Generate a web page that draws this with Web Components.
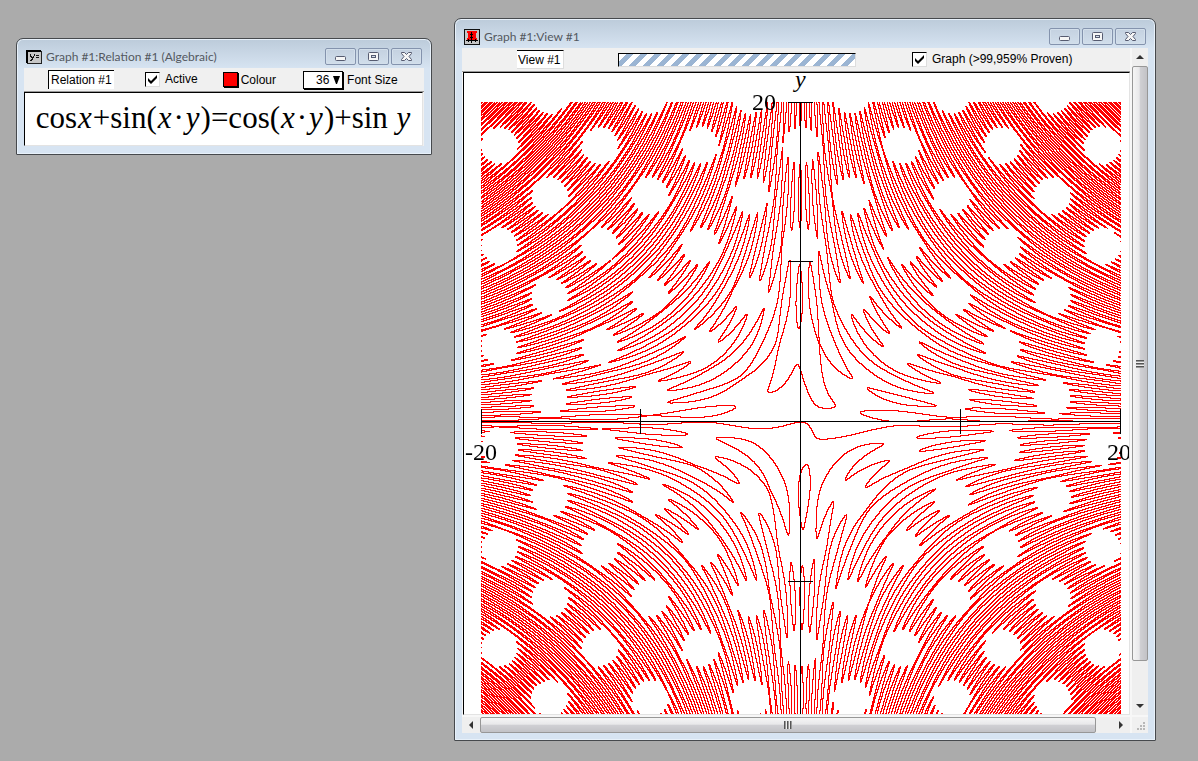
<!DOCTYPE html>
<html lang="en">
<head>
<meta charset="utf-8">
<title>Graph #1</title>
<style>
html, body { margin: 0; min-height: 100%; background: #ababab; }
body { font-family: "Liberation Sans", Arial, sans-serif; font-size: 12px; color: #000; }
</style>
</head>
<body>
<graph-desktop>
  <mdi-window slot="relation" heading="Graph #1:Relation #1 (Algebraic)">
    <svg slot="icon" width="16" height="14" viewBox="0 0 16 14" aria-hidden="true" shape-rendering="crispEdges">
      <rect x="1" y="1" width="14" height="12" fill="#c6c6c6" stroke="#222"/>
      <path d="M1 13V1h14" stroke="#000" stroke-width="2" fill="none"/>
      <path d="M4 4h1v2h1v1h1V6h1V4h1v2H8v2H7v2H6v1H4v-1h1V9h1V8H5V7H4zM10 5h3v1h-3zM10 7h3v1h-3z" fill="#111"/>
    </svg>
    <relation-panel></relation-panel>
  </mdi-window>
  <mdi-window slot="view" heading="Graph #1:View #1">
    <svg slot="icon" width="16" height="16" viewBox="0 0 16 16" aria-hidden="true" shape-rendering="crispEdges">
      <rect x="0" y="0" width="16" height="16" fill="#111"/>
      <rect x="1" y="1" width="14" height="14" fill="#c6c6c6"/>
      <path d="M3 2h10v2h-1v5h1v2H3V9h1V4H3z" fill="#f00"/>
      <path d="M7 3h1v11H7zM2 11h12v1H2zM4 10h1v3H4zM11 10h1v3h-1zM6 5h3v1H6zM6 8h3v1H6z"/>
    </svg>
    <view-panel></view-panel>
  </mdi-window>
</graph-desktop>

<script>
class GraphDesktop extends HTMLElement {
  constructor() {
    super();
    this.attachShadow({ mode: "open" }).innerHTML = `
      <style>
        :host { display: flex; align-items: flex-start; gap: 22px; padding: 18px 42px 20px 16px; background: #ababab; }
        .left { flex: 0 0 416px; margin-top: 20px; }
        .right { flex: 1; min-width: 0; }
      </style>
      <div class="left"><slot name="relation"></slot></div>
      <div class="right"><slot name="view"></slot></div>`;
  }
}

class MdiWindow extends HTMLElement {
  constructor() {
    super();
    this.attachShadow({ mode: "open" }).innerHTML = `
      <style>
        :host { display: block; box-sizing: border-box; border: 1px solid #46494d; border-radius: 7px 7px 1px 1px; padding: 0 7px 7px;
          background: linear-gradient(#bccbda 0, #d7e4f2 30px, #d7e4f2 100%); box-shadow: inset 0 0 0 1px #e8f1fa; }
        header { display: flex; align-items: center; height: 29px; }
        ::slotted(svg) { display: block; width: 16px; margin: 6px 4px 0 2px; }
        h1 { flex: 1; margin: 6px 0 0; font: 12px/16px Lato, "Noto Sans", sans-serif; color: #53585f; white-space: nowrap; }
        .buttons { display: flex; gap: 2px; padding: 6px 2px 0 0; }
        button { box-sizing: border-box; width: 31px; height: 17px; padding: 0; border: 1px solid #8493ad; border-radius: 2px;
          background: linear-gradient(#c4d1e0, #d1deeb); box-shadow: inset 0 0 0 1px #d3dfeb; }
        button svg { display: block; margin: auto; }
      </style>
      <header>
        <slot name="icon"></slot>
        <h1></h1>
        <div class="buttons">
          <button aria-label="Minimize"><svg width="13" height="11" viewBox="0 0 13 11"><rect x="1.500" y="5.500" width="10" height="4" rx="1" fill="#f6f6f6" stroke="#565b70"/></svg></button>
          <button aria-label="Maximize"><svg width="13" height="11" viewBox="0 0 13 11"><rect x="1.500" y="1.500" width="10" height="8" rx="1" fill="#f6f6f6" stroke="#565b70"/><rect x="4.500" y="4.500" width="4" height="2" fill="#d5e0ec" stroke="#565b70"/></svg></button>
          <button aria-label="Close"><svg width="13" height="11" viewBox="0 0 13 11"><path d="M1.500 1.500h3l2 2 2-2h3v1L9 5.500l2.500 3v1h-3l-2-2-2 2h-3v-1L4 5.500l-2.500-3z" fill="#f6f6f6" stroke="#565b70"/></svg></button>
        </div>
      </header>
      <slot></slot>`;
  }
  connectedCallback() {
    this.shadowRoot.querySelector("h1").textContent = this.getAttribute("heading");
  }
}

class TickBox extends HTMLElement {
  constructor() {
    super();
    this.attachShadow({ mode: "open" }).innerHTML = `
      <style>
        :host { display: block; }
        label { display: flex; align-items: center; gap: 5px; line-height: 15px; white-space: nowrap; }
        input { appearance: none; box-sizing: border-box; width: 15px; height: 15px; margin: 0; border: 1px solid; border-color: #000 #ddd #ddd #000;
          background: #fff url("data:image/svg+xml,%3Csvg xmlns='http://www.w3.org/2000/svg' width='13' height='13'%3E%3Cpath d='M2 5l3 3 6-6v3l-6 6-3-3z'/%3E%3C/svg%3E"); }
      </style>
      <label><input type="checkbox" checked><slot></slot></label>`;
  }
}

class RelationPanel extends HTMLElement {
  constructor() {
    super();
    this.attachShadow({ mode: "open" }).innerHTML = `
      <style>
        :host { display: block; background: #f0f0f0; }
        .bar { display: flex; align-items: center; height: 23px; border-bottom: 1px solid #999; }
        .name { box-sizing: border-box; width: 66px; height: 19px; margin-left: 24px; padding: 0 0 0 2px; border: 0 solid #000; border-width: 1px 0 0 1px;
          font: 12px "Liberation Sans", Arial, sans-serif; background: #fff; color: #000; }
        tick-box { margin-left: 31px; }
        .colour { display: flex; align-items: center; gap: 3px; margin-left: 25px; padding: 0; border: 0; background: none; font: inherit; color: inherit; }
        .swatch { box-sizing: border-box; width: 15px; height: 15px; border: 1px solid #000; background: red; box-shadow: 1px 1px #000; }
        .size { display: flex; align-items: center; gap: 4px; margin-left: 27px; white-space: nowrap; }
        .drop { position: relative; display: flex; }
        select { appearance: none; box-sizing: border-box; width: 40px; height: 18px; padding: 0 0 0 12px; border: 1px solid #000; border-radius: 0; background: #fff; color: #000;
          font: 12px "Liberation Sans", Arial, sans-serif; box-shadow: 1px 1px #000; }
        .drop svg { position: absolute; right: 3px; top: 5px; pointer-events: none; }
        .formula { height: 52px; border: 1px solid; border-color: #000 #e3e3e3 #e3e3e3 #000; background: #fff; margin: 0 1px 1px 0;
          font: 31px/50px "Liberation Serif", "Times New Roman", serif; white-space: nowrap; text-align: center; }
        .formula i { margin: 0 1px; }
        .formula b { margin: 0 1px; font-weight: normal; }
      </style>
      <div class="bar">
        <input class="name" aria-label="Relation name" value="Relation #1">
        <tick-box>Active</tick-box>
        <button class="colour"><span class="swatch"></span>Colour</button>
        <label class="size"><span class="drop"><select><option>36</option></select><svg width="7" height="8" viewBox="0 0 7 8"><path d="M0 0h7L4 8H3z"/></svg></span>Font Size</label>
      </div>
      <div class="formula">cos<i>x</i>+sin(<i>x</i><b>·</b><i>y</i>)=cos(<i>x</i><b>·</b><i>y</i>)+sin <i>y</i></div>`;
  }
}

class ScrollStrip extends HTMLElement {
  constructor() {
    super();
    this.attachShadow({ mode: "open" }).innerHTML = `
      <style>
        :host { display: flex; flex-direction: column; background: #efefef; }
        :host([horizontal]) { flex-direction: row; height: 16px; }
        button { flex: 0 0 18px; display: grid; place-items: center; padding: 0; border: 0; background: none; }
        .track { flex: 1; display: flex; flex-direction: column; min-height: 0; min-width: 0; padding-bottom: 36px; }
        .thumb { flex: 1; display: grid; place-items: center; box-sizing: border-box; border: 1px solid #979797; border-radius: 2px;
          background: linear-gradient(90deg, #f5f5f5, #e8e8ea 45%, #d0d0d4 50%, #c2c2c6); }
        .grip { width: 8px; height: 8px; background: repeating-linear-gradient(#555 0 1px, #999 1px 2px, #eee 2px 3px); }
        :host([horizontal]) .track { flex-direction: row; padding: 0 16px 0 0; }
        :host([horizontal]) .thumb { background: linear-gradient(#f5f5f5, #e8e8ea 45%, #d0d0d4 50%, #c2c2c6); }
        :host([horizontal]) .grip { background: repeating-linear-gradient(90deg, #555 0 1px, #999 1px 2px, #eee 2px 3px); }
        :host([horizontal]) svg { transform: rotate(-90deg); }
      </style>
      <button aria-label="Back"><svg width="8" height="8" viewBox="0 0 8 8"><path d="M0 6h8L4 2z" fill="#333"/></svg></button>
      <div class="track"><div class="thumb"><div class="grip"></div></div></div>
      <button aria-label="Forward"><svg width="8" height="8" viewBox="0 0 8 8"><path d="M0 2h8L4 6z" fill="#333"/></svg></button>`;
  }
}

/* Plots cos x + sin(xy) = cos(xy) + sin y at 16 pixels per unit. */
class RelationPlot extends HTMLElement {
  constructor() {
    super();
    this.attachShadow({ mode: "open" }).innerHTML = `
      <style>
        :host { display: block; position: relative; overflow: hidden; background: #fff; padding: 29px 0 0 17px; }
        canvas { display: block; }
        span { position: absolute; font: 24px/24px "Liberation Serif", "Times New Roman", serif; }
        .y { left: 331px; top: -6px; font-style: italic; }
        .top { left: 288px; top: 17px; }
        .min { left: 1px; top: 367px; }
        .max { left: 643px; top: 367px; }
      </style>
      <canvas width="640" height="612"></canvas>
      <span class="y">y</span><span class="top">20</span><span class="min">-20</span><span class="max">20</span>`;
  }
  connectedCallback() {
    const c = this.shadowRoot.querySelector("canvas");
    const g = c.getContext("2d");
    const f = (x, y) => Math.cos(x) + Math.sin(x * y) - Math.cos(x * y) - Math.sin(y);
    const w = c.width, h = c.height, n = 2, cols = w * n + 1;
    const sign = new Uint8Array(cols * (h * n + 1));
    for (let j = 0; j <= h * n; j++)
      for (let i = 0; i <= w * n; i++)
        sign[j * cols + i] = f(i / (16 * n) - 20, 20 - j / (16 * n)) > 0 ? 1 : 0;
    g.fillStyle = "#f00";
    for (let j = 0; j < h; j++)
      for (let i = 0; i < w; i++) {
        let s = 0;
        for (let b = 0; b <= n; b++)
          for (let a = 0; a <= n; a++) s += sign[(j * n + b) * cols + i * n + a];
        if (s > 0 && s < (n + 1) * (n + 1)) g.fillRect(i, j, 1, 1);
      }
    g.fillStyle = "#000";
    g.fillRect(319, 0, 1, h);
    g.fillRect(0, 319, w, 1);
    for (const x of [0, 159, 479, 639]) g.fillRect(x, 307, 1, 25);
    for (const y of [0, 159, 479]) g.fillRect(307, y, 25, 1);
  }
}

class ViewPanel extends HTMLElement {
  constructor() {
    super();
    this.attachShadow({ mode: "open" }).innerHTML = `
      <style>
        :host { display: grid; grid-template-columns: minmax(0, 1fr) 16px; gap: 2px; background: #f7f7f7; }
        .bar { display: flex; align-items: center; height: 23px; background: #f0f0f0; border-bottom: 1px solid #999; }
        .name { box-sizing: border-box; width: 47px; height: 19px; margin-left: 55px; padding: 0 0 0 1px; border: 1px solid; border-color: #000 #ddd #ddd #fff; border-width: 1px 1px 1px 0;
          font: 12px "Liberation Sans", Arial, sans-serif; background: #fff; color: #000; }
        .progress { box-sizing: border-box; width: 238px; height: 14px; margin-left: 54px; border: 1px solid; border-color: #000 #ddd #ddd #000;
          background: repeating-linear-gradient(135deg, #fff 0 5px, #9bb5d3 5px 10px); }
        tick-box { margin-left: 56px; }
        relation-plot { border: 1px solid; border-color: #000 #e3e3e3 #e3e3e3 #000; margin-left: 1px; }
        .corner { display: grid; place-items: end; background: #f0f0f0; }
      </style>
      <div>
        <div class="bar">
          <input class="name" aria-label="View name" value="View #1">
          <div class="progress" role="progressbar" aria-label="Plotting"></div>
          <tick-box>Graph (&gt;99,959% Proven)</tick-box>
        </div>
        <relation-plot></relation-plot>
      </div>
      <scroll-strip></scroll-strip>
      <scroll-strip horizontal></scroll-strip>
      <div class="corner"><svg width="12" height="12" viewBox="0 0 12 12" fill="#b8b8b8"><path d="M7 1h2v2H7zM4 4h2v2H4zM7 4h2v2H7zM1 7h2v2H1zM4 7h2v2H4zM7 7h2v2H7z"/></svg></div>`;
  }
}

customElements.define("tick-box", TickBox);
customElements.define("scroll-strip", ScrollStrip);
customElements.define("relation-plot", RelationPlot);
customElements.define("relation-panel", RelationPanel);
customElements.define("view-panel", ViewPanel);
customElements.define("mdi-window", MdiWindow);
customElements.define("graph-desktop", GraphDesktop);
</script>
</body>
</html>
